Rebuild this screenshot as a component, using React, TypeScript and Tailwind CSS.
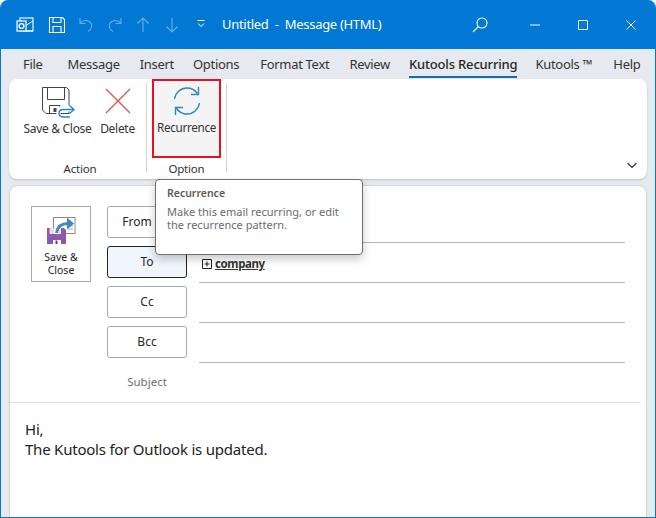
const font = { fontFamily: '"Noto Sans", sans-serif' };

function TitleIcon({ children, className = "" }: { children: React.ReactNode; className?: string }) {
  return (
    <svg viewBox="0 0 20 20" className={"w-5 h-5 " + className} fill="none" stroke="currentColor" strokeWidth="1.1">
      {children}
    </svg>
  );
}

function Tab({ label, active = false, className = "" }: { label: string; active?: boolean; className?: string }) {
  return (
    <div className={"relative whitespace-nowrap text-[13px] leading-[31px] h-[30px] " + (active ? "font-medium tracking-[-0.17px] text-[#262626] " : "tracking-[-0.3px] text-[#333] ") + className}>
      {label}
      {active && <div className="absolute left-0 right-0 bottom-[1px] h-[2px] bg-[#0f6cbd]" />}
    </div>
  );
}

function RecipButton({ label, active = false, className = "" }: { label: string; active?: boolean; className?: string }) {
  return (
    <div className={"w-20 h-8 rounded-[3px] border flex items-center justify-center text-[12px] text-[#262626] " + (active ? "border-[#222] bg-[#eff6fc] " : "border-[#a8a8a8] bg-white ") + className}>
      {label}
    </div>
  );
}

export default function App() {
  return (
    <div style={font} className="w-[656px] h-[518px] overflow-hidden bg-[#e6e9ef] flex flex-col border-x border-b border-[#0078d4] rounded-t-lg box-border">
      <div className="h-[49px] shrink-0 bg-[#0078d4] text-white flex items-center pl-[15px] pr-[19px] -mx-px">
        <svg viewBox="0 0 20 20" className="w-5 h-5" fill="none" stroke="white">
          <rect x="5" y="3" width="13" height="13" strokeWidth="1.1" />
          <path d="M5 6 L11.5 10 L18 6" strokeWidth="1" />
          <rect x="2" y="6" width="9" height="10" fill="#0078d4" strokeWidth="1.2" />
          <circle cx="6.5" cy="11" r="2.4" strokeWidth="1.4" />
          <path d="M11 16 L18 16" strokeWidth="1.1" />
        </svg>
        <TitleIcon className="ml-[12px]">
          <path d="M2.5 2.5 H15.5 L17.5 4.5 V17.5 H2.5 Z M6 2.5 V7.5 H14 V2.5 M6 17.5 V11.5 H14 V17.5" />
        </TitleIcon>
        <TitleIcon className="ml-[9px] text-[#69aee3]">
          <path d="M4 3 V8.5 H9.5 M4.3 8.2 C7 4.5 14 4.5 15.5 9.5 C16.3 12.5 14.5 15 12 16.5" />
        </TitleIcon>
        <TitleIcon className="ml-[9px] text-[#69aee3]">
          <path d="M16 3 V8.5 H10.5 M15.7 8.2 C13 4.5 6 4.5 4.5 9.5 C3.7 12.5 5.5 15 8 16.5" />
        </TitleIcon>
        <TitleIcon className="ml-[8px] text-[#69aee3]">
          <path d="M10 17 V3 M4.5 8.5 L10 3 L15.5 8.5" />
        </TitleIcon>
        <TitleIcon className="ml-[9px] text-[#69aee3]">
          <path d="M10 3 V17 M4.5 11.5 L10 17 L15.5 11.5" />
        </TitleIcon>
        <svg viewBox="0 0 10 10" className="w-[10px] h-[10px] ml-[14px] mb-px" fill="none" stroke="white" strokeWidth="1">
          <path d="M1.5 1.5 H8.5 M2 4.5 L5 7.5 L8 4.5" />
        </svg>
        <div className="ml-[16px] text-[13px] tracking-[-0.3px] whitespace-nowrap">Untitled&nbsp; -&nbsp; Message (HTML)</div>
        <svg viewBox="0 0 20 20" className="w-5 h-5 ml-auto" fill="none" stroke="white" strokeWidth="1.1">
          <circle cx="12" cy="8" r="5" />
          <path d="M8.5 11.5 L3 17" />
        </svg>
        <svg viewBox="0 0 12 12" className="w-3 h-3 ml-[39px]" fill="none" stroke="white" strokeWidth="1">
          <path d="M1 6 H11" />
        </svg>
        <svg viewBox="0 0 12 12" className="w-3 h-3 ml-[36px]" fill="none" stroke="white" strokeWidth="1">
          <rect x="1.5" y="1.5" width="9" height="9" rx="0.5" />
        </svg>
        <svg viewBox="0 0 12 12" className="w-3 h-3 ml-[36px]" fill="none" stroke="white" strokeWidth="1">
          <path d="M1.5 1.5 L10.5 10.5 M10.5 1.5 L1.5 10.5" />
        </svg>
      </div>

      <div className="h-[30px] shrink-0 flex pl-[22px] gap-[20px]">
        <Tab label="File" className="mr-[5px]" />
        <Tab label="Message" />
        <Tab label="Insert" className="-mr-px" />
        <Tab label="Options" className="mr-px" />
        <Tab label="Format Text" />
        <Tab label="Review" className="-mr-px" />
        <Tab label="Kutools Recurring" active className="-mr-[2px]" />
        <Tab label="Kutools ™" className="mr-px" />
        <Tab label="Help" />
      </div>

      <div className="h-[100px] shrink-0 mx-2 bg-white rounded-lg shadow-[0_1px_2px_rgba(0,0,0,0.18)] flex relative">
        <div className="w-[137px] flex flex-col">
          <div className="h-[79px] flex pl-[14px] pt-[6px] gap-[9px]">
            <div className="w-[69px] flex flex-col items-center">
              <svg viewBox="0 0 32 32" className="w-8 h-8 overflow-visible" fill="none">
                <path d="M0.5 2.5 H24.5 L27 5 V28.5 H4 L0.5 25 Z" stroke="#444" strokeWidth="1" />
                <path d="M5.5 2.5 V14.5 H22.5 V2.5" stroke="#444" strokeWidth="1" />
                <path d="M7.5 28.5 V20.5 H18 V28.5" stroke="#444" strokeWidth="1" />
                <rect x="11.5" y="23" width="3" height="4" fill="#444" />
                <path d="M18 28 C18 22 22 21 32 24" stroke="white" strokeWidth="5" />
                <path d="M31 24.5 H20.5 C15 24.5 15 32 20.5 32 H28" stroke="white" strokeWidth="4" />
                <path d="M31.5 24.5 H21.5 C15.5 24.5 15.5 32 21.5 32 H28" stroke="#2e86c4" strokeWidth="1.4" />
                <path d="M27.5 20.5 L32 24.5 L27.5 28.5" stroke="#2e86c4" strokeWidth="1.4" />
              </svg>
              <div className="text-[12px] tracking-[-0.3px] text-[#333] mt-[3px] whitespace-nowrap">Save &amp; Close</div>
            </div>
            <div className="w-[33px] flex flex-col items-center">
              <svg viewBox="0 0 32 32" className="w-8 h-8" fill="none" stroke="#d9534f" strokeWidth="1.3">
                <path d="M4 4 L28 28 M28 4 L4 28" />
              </svg>
              <div className="text-[12px] tracking-[-0.3px] text-[#333] mt-[3px]">Delete</div>
            </div>
          </div>
          <div className="text-[11.5px] tracking-[-0.2px] text-[#333] text-center mt-[2px] pl-[5px]">Action</div>
        </div>
        <div className="w-px h-[89px] mt-[4px] bg-[#d4d4d4]" />
        <div className="w-[79px] flex flex-col items-center">
          <div className="w-[69px] h-[79px] border-2 border-[#e81123] bg-[#f4f4f4] flex flex-col items-center pt-[4px]">
            <svg viewBox="0 0 32 32" className="w-8 h-8" fill="none" stroke="#2e86c4" strokeWidth="1.4">
              <path d="M3.5 14 C4.5 7.5 10 3 16 3 C20.5 3 24 5 26.5 8.5 M27.5 2 V9.5 H20" />
              <path d="M28.5 18 C27.5 24.5 22 29 16 29 C11.5 29 8 27 5.5 23.5 M4.5 30 V22.5 H12" />
            </svg>
            <div className="text-[11.7px] tracking-[-0.3px] text-[#333] mt-[2px]">Recurrence</div>
          </div>
          <div className="text-[11.5px] tracking-[-0.2px] text-[#333] text-center mt-[2px]">Option</div>
        </div>
        <div className="w-px h-[89px] mt-[4px] bg-[#d4d4d4]" />
        <svg viewBox="0 0 12 12" className="absolute right-[9px] bottom-[8px] w-3 h-3" fill="none" stroke="#333" strokeWidth="1.2">
          <path d="M1.5 4 L6 8.5 L10.5 4" />
        </svg>
      </div>

      <div className="mt-[6px] mx-2 flex-1 bg-white rounded-t-lg border-x border-t border-[#d6d6d6] flex flex-col">
        <div className="h-[217px] shrink-0 flex pl-[21px] pt-[20px] border-b border-[#e1e1e1] mx-[5px] -ml-0">
          <div className="w-[60px] h-[76px] border border-[#a8a8a8] flex flex-col items-center pt-[8px] text-[10.5px] leading-[13px] text-[#222] text-center">
            <svg viewBox="0 0 32 32" className="w-8 h-8" fill="none">
              <rect x="8.5" y="2.5" width="21.5" height="16" fill="white" stroke="#8a8a8a" strokeWidth="1" />
              <path d="M22 8 H28 M23 11 H28 M23 14 H28" stroke="#a0a0a0" strokeWidth="1" />
              <path d="M2 13 H19 L21 15 V29 H2 Z" fill="#8c5aa8" />
              <rect x="4.5" y="13" width="11.5" height="6" fill="#e6dbef" />
              <rect x="8" y="25" width="8" height="4" fill="white" />
              <rect x="10.5" y="25.5" width="2" height="3.5" fill="#5f3b78" />
              <path d="M11 19 C12 11 17 8.5 23 8.5" stroke="white" strokeWidth="4.5" />
              <path d="M11.5 18 C12.5 11.5 17 8.5 23 8.5" stroke="#3f87c6" strokeWidth="3" />
              <path d="M22 2.5 L29 8.5 L22 14.5 Z" fill="#3f87c6" />
            </svg>
            <div className="mt-[4px]">Save &amp;<br />Close</div>
          </div>
          <div className="ml-4 flex flex-col w-20 gap-2">
            <RecipButton label="From" className="pr-[20px]" />
            <RecipButton label="To" active />
            <RecipButton label="Cc" />
            <RecipButton label="Bcc" />
            <div className="text-center text-[11.5px] text-[#6e6e6e] mt-[7px]">Subject</div>
          </div>
          <div className="ml-3 w-[426px] flex flex-col">
            <div className="h-[37px] border-b border-[#b5b5b5]" />
            <div className="h-[40px] border-b border-[#b5b5b5] flex items-center gap-[3px] pt-[2px]">
              <svg viewBox="0 0 10 10" className="w-[10px] h-[10px] ml-[3px]" fill="none" stroke="#222" strokeWidth="1">
                <path d="M0.5 0.5 H9.5 V9.5 H0.5 Z M2.5 5 H7.5 M5 2.5 V7.5" />
              </svg>
              <span className="text-[11.5px] font-bold tracking-[-0.4px] underline text-[#333]">company</span>
            </div>
            <div className="h-[40px] border-b border-[#b5b5b5]" />
            <div className="h-[40px] border-b border-[#b5b5b5]" />
          </div>
        </div>
        <div className="pl-[15px] pt-[16px] text-[15px] leading-[20px] tracking-[-0.22px] text-[#222]">
          <div>Hi,</div>
          <div>The Kutools for Outlook is updated.</div>
        </div>
      </div>

      <div className="absolute left-[155px] top-[179px] w-[208px] h-[76px] bg-white border border-[#6f6f6f] rounded-[4px] shadow-[0_4px_10px_rgba(0,0,0,0.22)] px-[11px] pt-[7px] text-[11px] leading-[13px] text-[#6b6b6b]">
        <div className="font-semibold text-[10.5px] text-[#5a5a5a]">Recurrence</div>
        <div className="mt-[5px]">
          <div>Make this email recurring, or edit</div>
          <div>the recurrence pattern.</div>
        </div>
      </div>
    </div>
  );
}
